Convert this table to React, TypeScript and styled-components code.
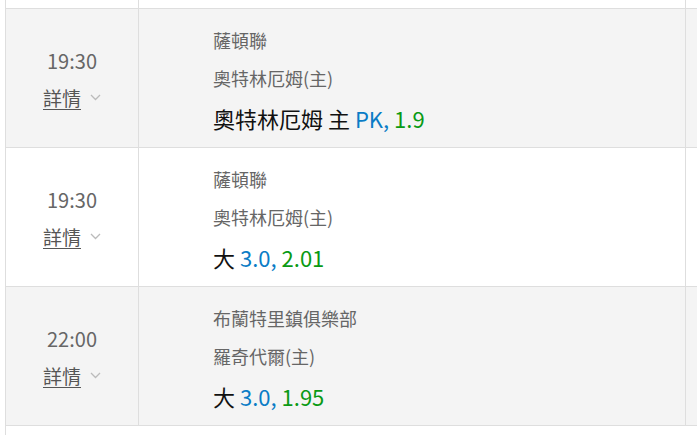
import React from "react";
import styled, { createGlobalStyle } from "styled-components";

const GlobalStyle = createGlobalStyle`
  body {
    margin: 0;
    background: #fff;
    font-family: "Noto Sans CJK TC", "Noto Sans", sans-serif;
    overflow: hidden;
  }
`;

interface matchProps {
  time: string;
  league: string;
  home: string;
  pick: string;
  line: string;
  odds: string;
  shaded: boolean;
}

const matches: matchProps[] = [
  { time: "19:30", league: "薩頓聯", home: "奧特林厄姆(主)", pick: "奧特林厄姆 主", line: "PK", odds: "1.9", shaded: true },
  { time: "19:30", league: "薩頓聯", home: "奧特林厄姆(主)", pick: "大", line: "3.0", odds: "2.01", shaded: false },
  { time: "22:00", league: "布蘭特里鎮俱樂部", home: "羅奇代爾(主)", pick: "大", line: "3.0", odds: "1.95", shaded: true },
];

const Chevron = () => (
  <svg width="11" height="7" viewBox="0 0 11 7" fill="none">
    <path d="M1 1l4.5 4.5L10 1" stroke="#bbb" strokeWidth="1.3" />
  </svg>
);

const App = () => {
  return (
    <>
      <GlobalStyle />
      <Table>
        <Row $height={8} $shaded={false}>
          <TimeCell />
          <InfoCell />
          <EdgeCell />
        </Row>
        {matches.map((m, i) => (
          <Row key={i} $height={138} $shaded={m.shaded}>
            <TimeCell>
              <span className="time">{m.time}</span>
              <span className="detail">
                <u>詳情</u>
                <Chevron />
              </span>
            </TimeCell>
            <InfoCell>
              <p className="league">{m.league}</p>
              <p className="home">{m.home}</p>
              <p className="tip">
                {m.pick} <Blue>{m.line},</Blue> <Green>{m.odds}</Green>
              </p>
            </InfoCell>
            <EdgeCell />
          </Row>
        ))}
        <Row $height={20} $shaded={false} />
      </Table>
    </>
  );
};

const Table = styled.div`
  margin-left: 5px;
  width: 720px;
  border-left: 1px solid #dedede;
`;

const Row = styled.div<{ $height: number; $shaded: boolean }>`
  display: flex;
  height: ${(p) => p.$height}px;
  background: ${(p) => (p.$shaded ? "#f4f4f4" : "#fff")};
  border-bottom: 1px solid #dedede;

  &:last-child {
    border-bottom: none;
  }
`;

const TimeCell = styled.div`
  width: 133px;
  flex-shrink: 0;
  border-right: 1px solid #dedede;
  display: flex;
  flex-direction: column;
  align-items: center;
  justify-content: center;
  padding-top: 1px;
  box-sizing: border-box;
  color: #666;

  .time {
    font-size: 20px;
    line-height: 37px;
  }
  .detail {
    display: flex;
    align-items: center;
    gap: 9px;
    font-size: 19px;
    line-height: 37px;
    color: #555;
    margin-left: 0;
  }
  .detail u {
    text-underline-offset: 3px;
  }
`;

const InfoCell = styled.div`
  width: 547px;
  flex-shrink: 0;
  border-right: 1px solid #dedede;
  box-sizing: border-box;
  padding: 4px 0 0 74px;
  display: flex;
  flex-direction: column;
  justify-content: center;

  p {
    margin: 0;
  }
  .league,
  .home {
    font-size: 18px;
    line-height: 38px;
    color: #666;
  }
  .tip {
    font-size: 22px;
    line-height: 42px;
    color: #111;
  }
`;

const EdgeCell = styled.div`
  flex: 1;
`;

const Blue = styled.span`
  color: #0a7cc6;
`;

const Green = styled.span`
  color: #0a9a14;
`;

export default App;
